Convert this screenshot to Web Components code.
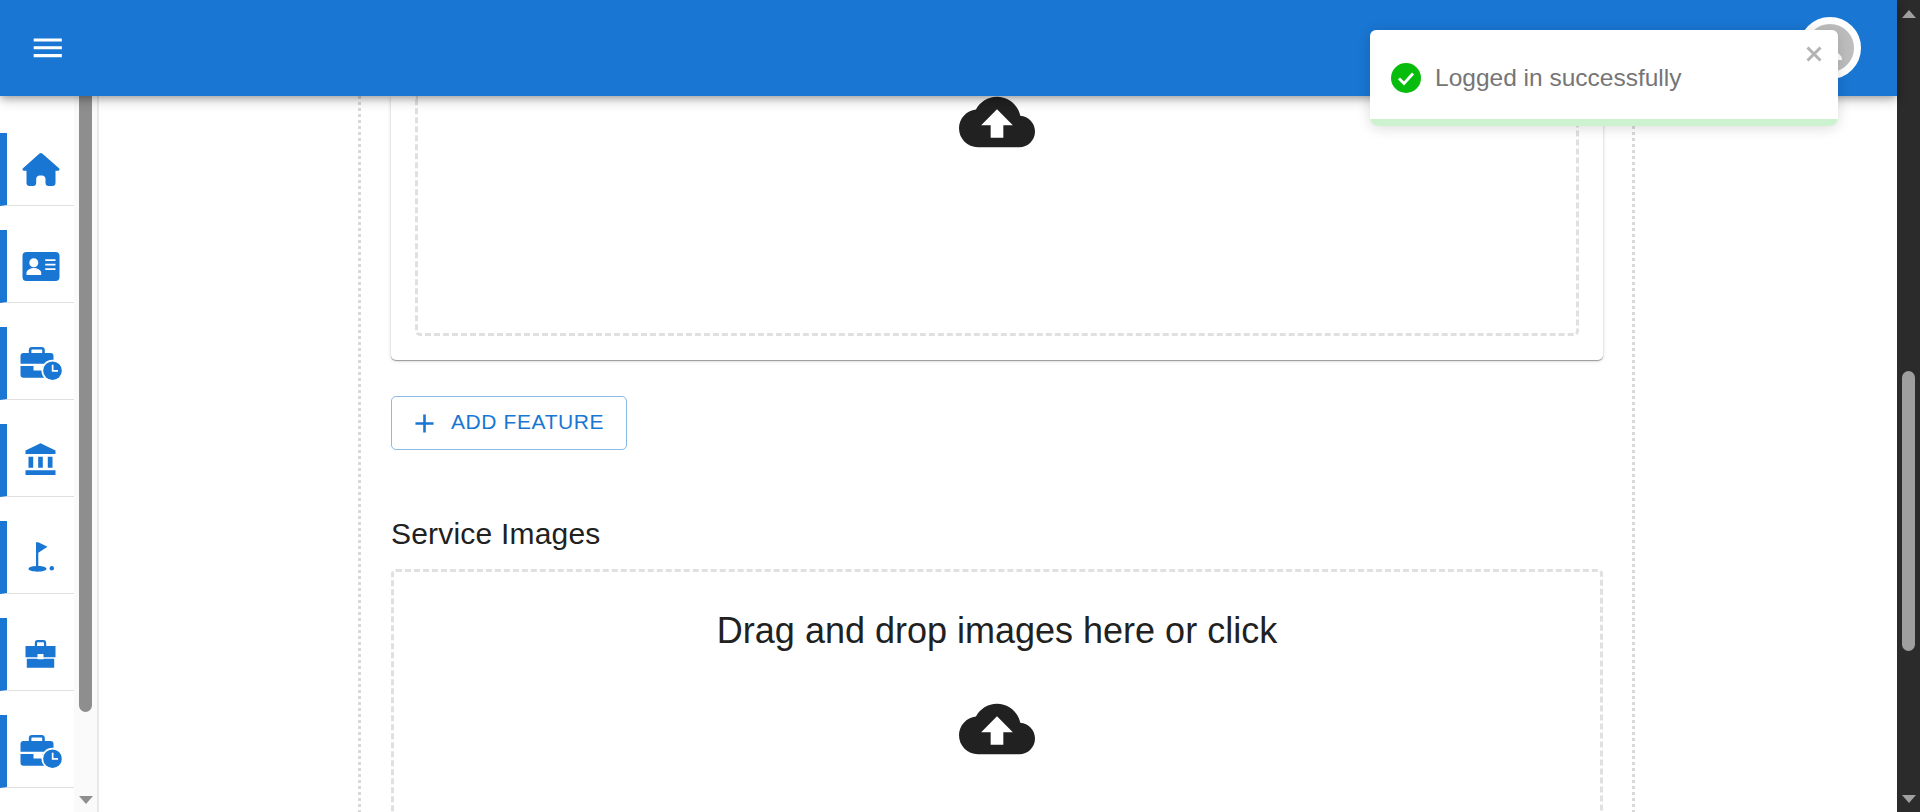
<!DOCTYPE html>
<html>
<head>
<meta charset="utf-8">
<title>Service</title>
<style>
  html, body { margin: 0; height: 100%; overflow: hidden; background: #fff; }
  body { display: flex; font-family: "Liberation Sans", Arial, sans-serif; position: relative; }
  app-shell { flex: 1; min-width: 0; }
</style>
</head>
<body>
<app-shell>
  <top-bar slot="bar"></top-bar>
  <side-nav slot="nav">
    <nav-item icon="home"></nav-item>
    <nav-item icon="contact"></nav-item>
    <nav-item icon="workclock"></nav-item>
    <nav-item icon="bank"></nav-item>
    <nav-item icon="golf"></nav-item>
    <nav-item icon="work"></nav-item>
    <nav-item icon="workclock"></nav-item>
  </side-nav>
  <service-form>
    <feature-card></feature-card>
    <add-button>ADD FEATURE</add-button>
    <section-title>Service Images</section-title>
    <drop-zone>Drag and drop images here or click</drop-zone>
  </service-form>
</app-shell>
<page-scrollbar></page-scrollbar>
<toast-message>Logged in successfully</toast-message>

<script>
// nav icons are all drawn in a 48 box
const ICONS = {
  home: '<path d="M22.500 8.600c.8-.7 1.900-.7 2.700 0L42 23.200c1 .9.4 2.600-1 2.600h-2.500V38c0 1.700-1.300 3-3 3h-4c-1.700 0-3-1.300-3-3v-4c0-2-1.600-3.400-3.500-3.400h-2.300c-1.900 0-3.500 1.400-3.500 3.400v4c0 1.700-1.300 3-3 3h-3.700c-1.700 0-3-1.300-3-3V25.800H7c-1.400 0-2-1.700-1-2.600z"/>',
  contact: '<path fill-rule="evenodd" d="M9.500 10h29a4 4 0 0 1 4 4v21a4 4 0 0 1-4 4h-29a4 4 0 0 1-4-4V14a4 4 0 0 1 4-4zM16.800 16.200a4.500 4.500 0 1 0 0 9 4.500 4.500 0 0 0 0-9zM9.500 33h14.700v-2.300c0-3-4.700-4.700-7.300-4.700s-7.400 1.700-7.400 4.700zM28.200 17.200v1.700h10.300v-1.700zm0 4.500v1.700h10.300v-1.700zm0 4.500v1.700h10.300v-1.700z"/>',
  workclock: '<path fill="none" stroke="#1976d2" stroke-width="2.600" d="M13.100 15V11.300c0-1 .8-2 2-2h9.400c1.200 0 2 1 2 2V15"/><path d="M6.500 14h27a3 3 0 0 1 3 3v7.700H3.500V17a3 3 0 0 1 3-3z"/><path d="M3.500 27H16.500v4.500h9V27h3v11.700H6.500a3 3 0 0 1-3-3z"/><circle cx="35.500" cy="31.700" r="11" fill="#fff"/><circle cx="35.500" cy="31.700" r="9.300"/><path fill="#fff" d="M34.800 25.700h1.700v5.300h4.500v1.700h-6.200z"/>',
  bank: '<path d="M23.500 7.300 38.500 14.500V18H8.500V14.500zM11.500 20.700h4.700v11h-4.700zm9.700 0h4.600v11h-4.600zm9.600 0h4.700v11h-4.700zM8.500 34.300h30V39h-30z"/>',
  golf: '<path d="M19 9.300h2.300l9.200 4.400-9.200 6V33c4.500.2 8.200 1.200 8.200 2.800 0 1.700-4 2.900-9 2.900s-9-1.200-9-2.900c0-1.500 3.300-2.500 7.500-2.800z"/><circle cx="34.800" cy="35.300" r="2.200"/>',
  work: '<path fill="none" stroke="#1976d2" stroke-width="2.200" d="M18.900 16.500V13c0-1 .7-1.900 1.700-1.900h5.800c1 0 1.700.9 1.700 1.900v3.500"/><path d="M8.500 16h30v11.300H26.500V24h-6v3.300h-12z"/><path d="M9.800 28.700h10.700v.6h6v-.6h10.700v9H9.800z"/>',
  cloud: '<path fill-rule="evenodd" d="M19.350 10.040C18.670 6.590 15.640 4 12 4 9.110 4 6.600 5.640 5.350 8.040 2.340 8.360 0 10.910 0 14c0 3.310 2.690 6 6 6h13c2.760 0 5-2.240 5-5 0-2.640-2.050-4.780-4.650-4.960zM14 13v4h-4v-4H7l5-5 5 5h-3z"/>'
};

class AppShell extends HTMLElement {
  constructor() {
    super();
    this.attachShadow({mode: 'open'});
    this.shadowRoot.innerHTML = `
      <style>
        :host { display: flex; flex-direction: column; height: 812px; }
        .row { flex: 1; display: flex; min-height: 0; }
        ::slotted(top-bar) { position: relative; z-index: 5; }
      </style>
      <slot name="bar"></slot>
      <div class="row"><slot name="nav"></slot><slot></slot></div>`;
  }
}

class TopBar extends HTMLElement {
  constructor() {
    super();
    this.attachShadow({mode: 'open'});
    this.shadowRoot.innerHTML = `
      <style>
        :host { display: flex; flex: none; align-items: center; justify-content: space-between; height: 96px; background: #1976d2;
          box-shadow: 0 3px 7px -1px rgba(0,0,0,.28), 0 5px 12px rgba(0,0,0,.16); padding: 0 36px 0 29px; }
        svg.menu { width: 37.500px; height: 37.500px; fill: #fff; display: block; }
        .avatar { width: 48px; height: 48px; border-radius: 50%; border: 7px solid #fff; background: #bdbdbd; overflow: hidden; }
        .avatar svg { width: 48px; height: 48px; fill: #fff; display: block; }
      </style>
      <svg class="menu" viewBox="0 0 24 24"><path d="M3 18h18v-2H3v2zm0-5h18v-2H3v2zm0-7v2h18V6H3z"/></svg>
      <div class="avatar"><svg viewBox="0 0 48 48"><circle cx="24" cy="18" r="8"/><path d="M12 36c0-5.500 5.400-9 12-9s12 3.500 12 9z"/></svg></div>`;
  }
}

class SideNav extends HTMLElement {
  constructor() {
    super();
    this.attachShadow({mode: 'open'});
    this.shadowRoot.innerHTML = `
      <style>
        :host { display: flex; width: 99px; flex: none; box-sizing: border-box; border-right: 2px solid #e8e8e8; }
        .list { width: 74px; flex: none; padding-top: 37px; display: flex; flex-direction: column; gap: 24px; }
        .track { width: 23px; background: #fafafa; display: flex; flex-direction: column; align-items: center; }
        .thumb { width: 13px; height: 616px; flex: none; background: #8e8e8e; border-radius: 0 0 7px 7px; }
        .arrow { margin-top: 84px; width: 0; height: 0; border: 7.500px solid transparent; border-top: 8px solid #8e8e8e; border-bottom: 0; }
      </style>
      <div class="list"><slot></slot></div>
      <div class="track"><div class="thumb"></div><div class="arrow"></div></div>`;
  }
}

class NavItem extends HTMLElement {
  constructor() {
    super();
    this.attachShadow({mode: 'open'});
    this.shadowRoot.innerHTML = `
      <style>
        :host { display: flex; flex: none; justify-content: center; align-items: flex-start; height: 73px; box-sizing: border-box;
          border-left: 7px solid #1976d2; border-bottom: 1px solid #e0e0e0; padding-top: 12px; }
        svg { width: 48px; height: 48px; fill: #1976d2; display: block; margin-left: 0; }
      </style>
      <svg viewBox="0 0 48 48"></svg>`;
  }
  connectedCallback() {
    this.shadowRoot.querySelector('svg').innerHTML = ICONS[this.getAttribute('icon')];
  }
}

class ServiceForm extends HTMLElement {
  constructor() {
    super();
    this.attachShadow({mode: 'open'});
    this.shadowRoot.innerHTML = `
      <style>
        :host { display: block; flex: 1; min-width: 0; overflow: hidden; padding-left: 259px; }
        .panel { width: 1277px; box-sizing: border-box; height: 100%; padding: 0 32px 0 33px; display: flex; flex-direction: column;
          background:
            repeating-linear-gradient(#d9d9d9 0 3px, transparent 3px 6px) left top / 3px 100% no-repeat,
            repeating-linear-gradient(#d9d9d9 0 3px, transparent 3px 6px) right top / 3px 100% no-repeat; }
        ::slotted(*) { flex: none; }
      </style>
      <div class="panel"><slot></slot></div>`;
  }
}

class FeatureCard extends HTMLElement {
  constructor() {
    super();
    this.attachShadow({mode: 'open'});
    this.shadowRoot.innerHTML = `
      <style>
        :host { display: block; height: 264px; box-sizing: border-box; padding: 0 24px 24px; background: #fff; border-radius: 0 0 5px 5px;
          box-shadow: 0 1px 1px rgba(0,0,0,.35), 0 1px 4px rgba(0,0,0,.14); }
        .inner { height: 100%; box-sizing: border-box; border: 3px dashed #e0e0e0; border-top: 0; border-radius: 0 0 5px 5px; display: flex; justify-content: center; }
        svg { width: 76px; height: 76px; fill: #212121; display: block; margin-top: -12px; }
      </style>
      <div class="inner"><svg viewBox="0 0 24 24">${ICONS.cloud}</svg></div>`;
  }
}

class AddButton extends HTMLElement {
  constructor() {
    super();
    this.attachShadow({mode: 'open'});
    this.shadowRoot.innerHTML = `
      <style>
        :host { display: inline-flex; align-self: flex-start; align-items: center; gap: 11.500px; width: 236px; height: 54px; box-sizing: border-box; margin-top: 36px;
          padding: 0 0 0 16.500px; border: 1px solid rgba(25,118,210,.5); border-radius: 5px; color: #1976d2; font-size: 21px; letter-spacing: .6px; line-height: 1; }
        svg { width: 31px; height: 31px; fill: #1976d2; display: block; flex: none; }
        span { padding-bottom: 3px; white-space: nowrap; }
      </style>
      <svg viewBox="0 0 24 24"><path d="M19 13h-6v6h-2v-6H5v-2h6V5h2v6h6v2z"/></svg><span><slot></slot></span>`;
  }
}

class SectionTitle extends HTMLElement {
  constructor() {
    super();
    this.attachShadow({mode: 'open'});
    this.shadowRoot.innerHTML = `
      <style>
        :host { display: block; margin-top: 64px; padding-left: 0; font-size: 30px; letter-spacing: .2px; line-height: 40px; color: #212121; }
      </style>
      <slot></slot>`;
  }
}

class DropZone extends HTMLElement {
  constructor() {
    super();
    this.attachShadow({mode: 'open'});
    this.shadowRoot.innerHTML = `
      <style>
        :host { display: flex; flex-direction: column; align-items: center; box-sizing: border-box; height: 320px; margin-top: 15px; padding-top: 35px;
          border: 3px dashed #e0e0e0; border-radius: 5px; font-size: 36px; line-height: 48px; color: #212121; }
        svg { width: 76px; height: 76px; fill: #212121; display: block; margin-top: 36px; flex: none; }
      </style>
      <slot></slot>
      <svg viewBox="0 0 24 24">${ICONS.cloud}</svg>`;
  }
}

class PageScrollbar extends HTMLElement {
  constructor() {
    super();
    this.attachShadow({mode: 'open'});
    this.shadowRoot.innerHTML = `
      <style>
        :host { display: flex; flex-direction: column; align-items: center; flex: none; width: 23px; height: 812px; background: #2b2b2b; box-sizing: border-box; padding-top: 10px; }
        .up { width: 0; height: 0; border: 7.500px solid transparent; border-bottom: 8px solid #a0a0a0; border-top: 0; }
        .thumb { width: 13px; height: 280px; margin-top: 353px; border-radius: 7px; background: #9f9f9f; }
        .down { width: 0; height: 0; margin-top: 144px; border: 7.500px solid transparent; border-top: 8px solid #a0a0a0; border-bottom: 0; }
      </style>
      <div class="up"></div><div class="thumb"></div><div class="down"></div>`;
  }
}

class ToastMessage extends HTMLElement {
  constructor() {
    super();
    this.attachShadow({mode: 'open'});
    this.shadowRoot.innerHTML = `
      <style>
        :host { position: absolute; z-index: 10; left: 1370px; top: 30px; width: 468px; height: 96px; box-sizing: border-box; overflow: hidden;
          display: flex; align-items: center; gap: 14px; padding: 0 0 0 21px; background: #fff; border-radius: 6px 6px 8px 8px;
          box-shadow: 0 2px 14px rgba(0,0,0,.14); color: #757575; font-size: 24.500px; }
        .ok { width: 30px; height: 30px; flex: none; display: block; margin-top: -1px; }
        .msg { margin-top: -1px; }
        .close { position: absolute; right: 16px; top: 16px; width: 16px; height: 16px; display: block; stroke: #b3b3b3; stroke-width: 3; fill: none; }
        .bar { position: absolute; left: 0; right: 0; bottom: 0; height: 7px; background: #cdf2cf; }
      </style>
      <svg class="ok" viewBox="0 0 30 30"><circle cx="15" cy="15" r="15" fill="#07bc0c"/><path d="M8 15.500l5 5 9-10" fill="none" stroke="#fff" stroke-width="2.800"/></svg>
      <span class="msg"><slot></slot></span>
      <svg class="close" viewBox="0 0 16 16"><path d="M1.500 1.500l13 13M14.500 1.500l-13 13"/></svg>
      <div class="bar"></div>`;
  }
}

customElements.define('app-shell', AppShell);
customElements.define('top-bar', TopBar);
customElements.define('side-nav', SideNav);
customElements.define('nav-item', NavItem);
customElements.define('service-form', ServiceForm);
customElements.define('feature-card', FeatureCard);
customElements.define('add-button', AddButton);
customElements.define('section-title', SectionTitle);
customElements.define('drop-zone', DropZone);
customElements.define('page-scrollbar', PageScrollbar);
customElements.define('toast-message', ToastMessage);
</script>
</body>
</html>
